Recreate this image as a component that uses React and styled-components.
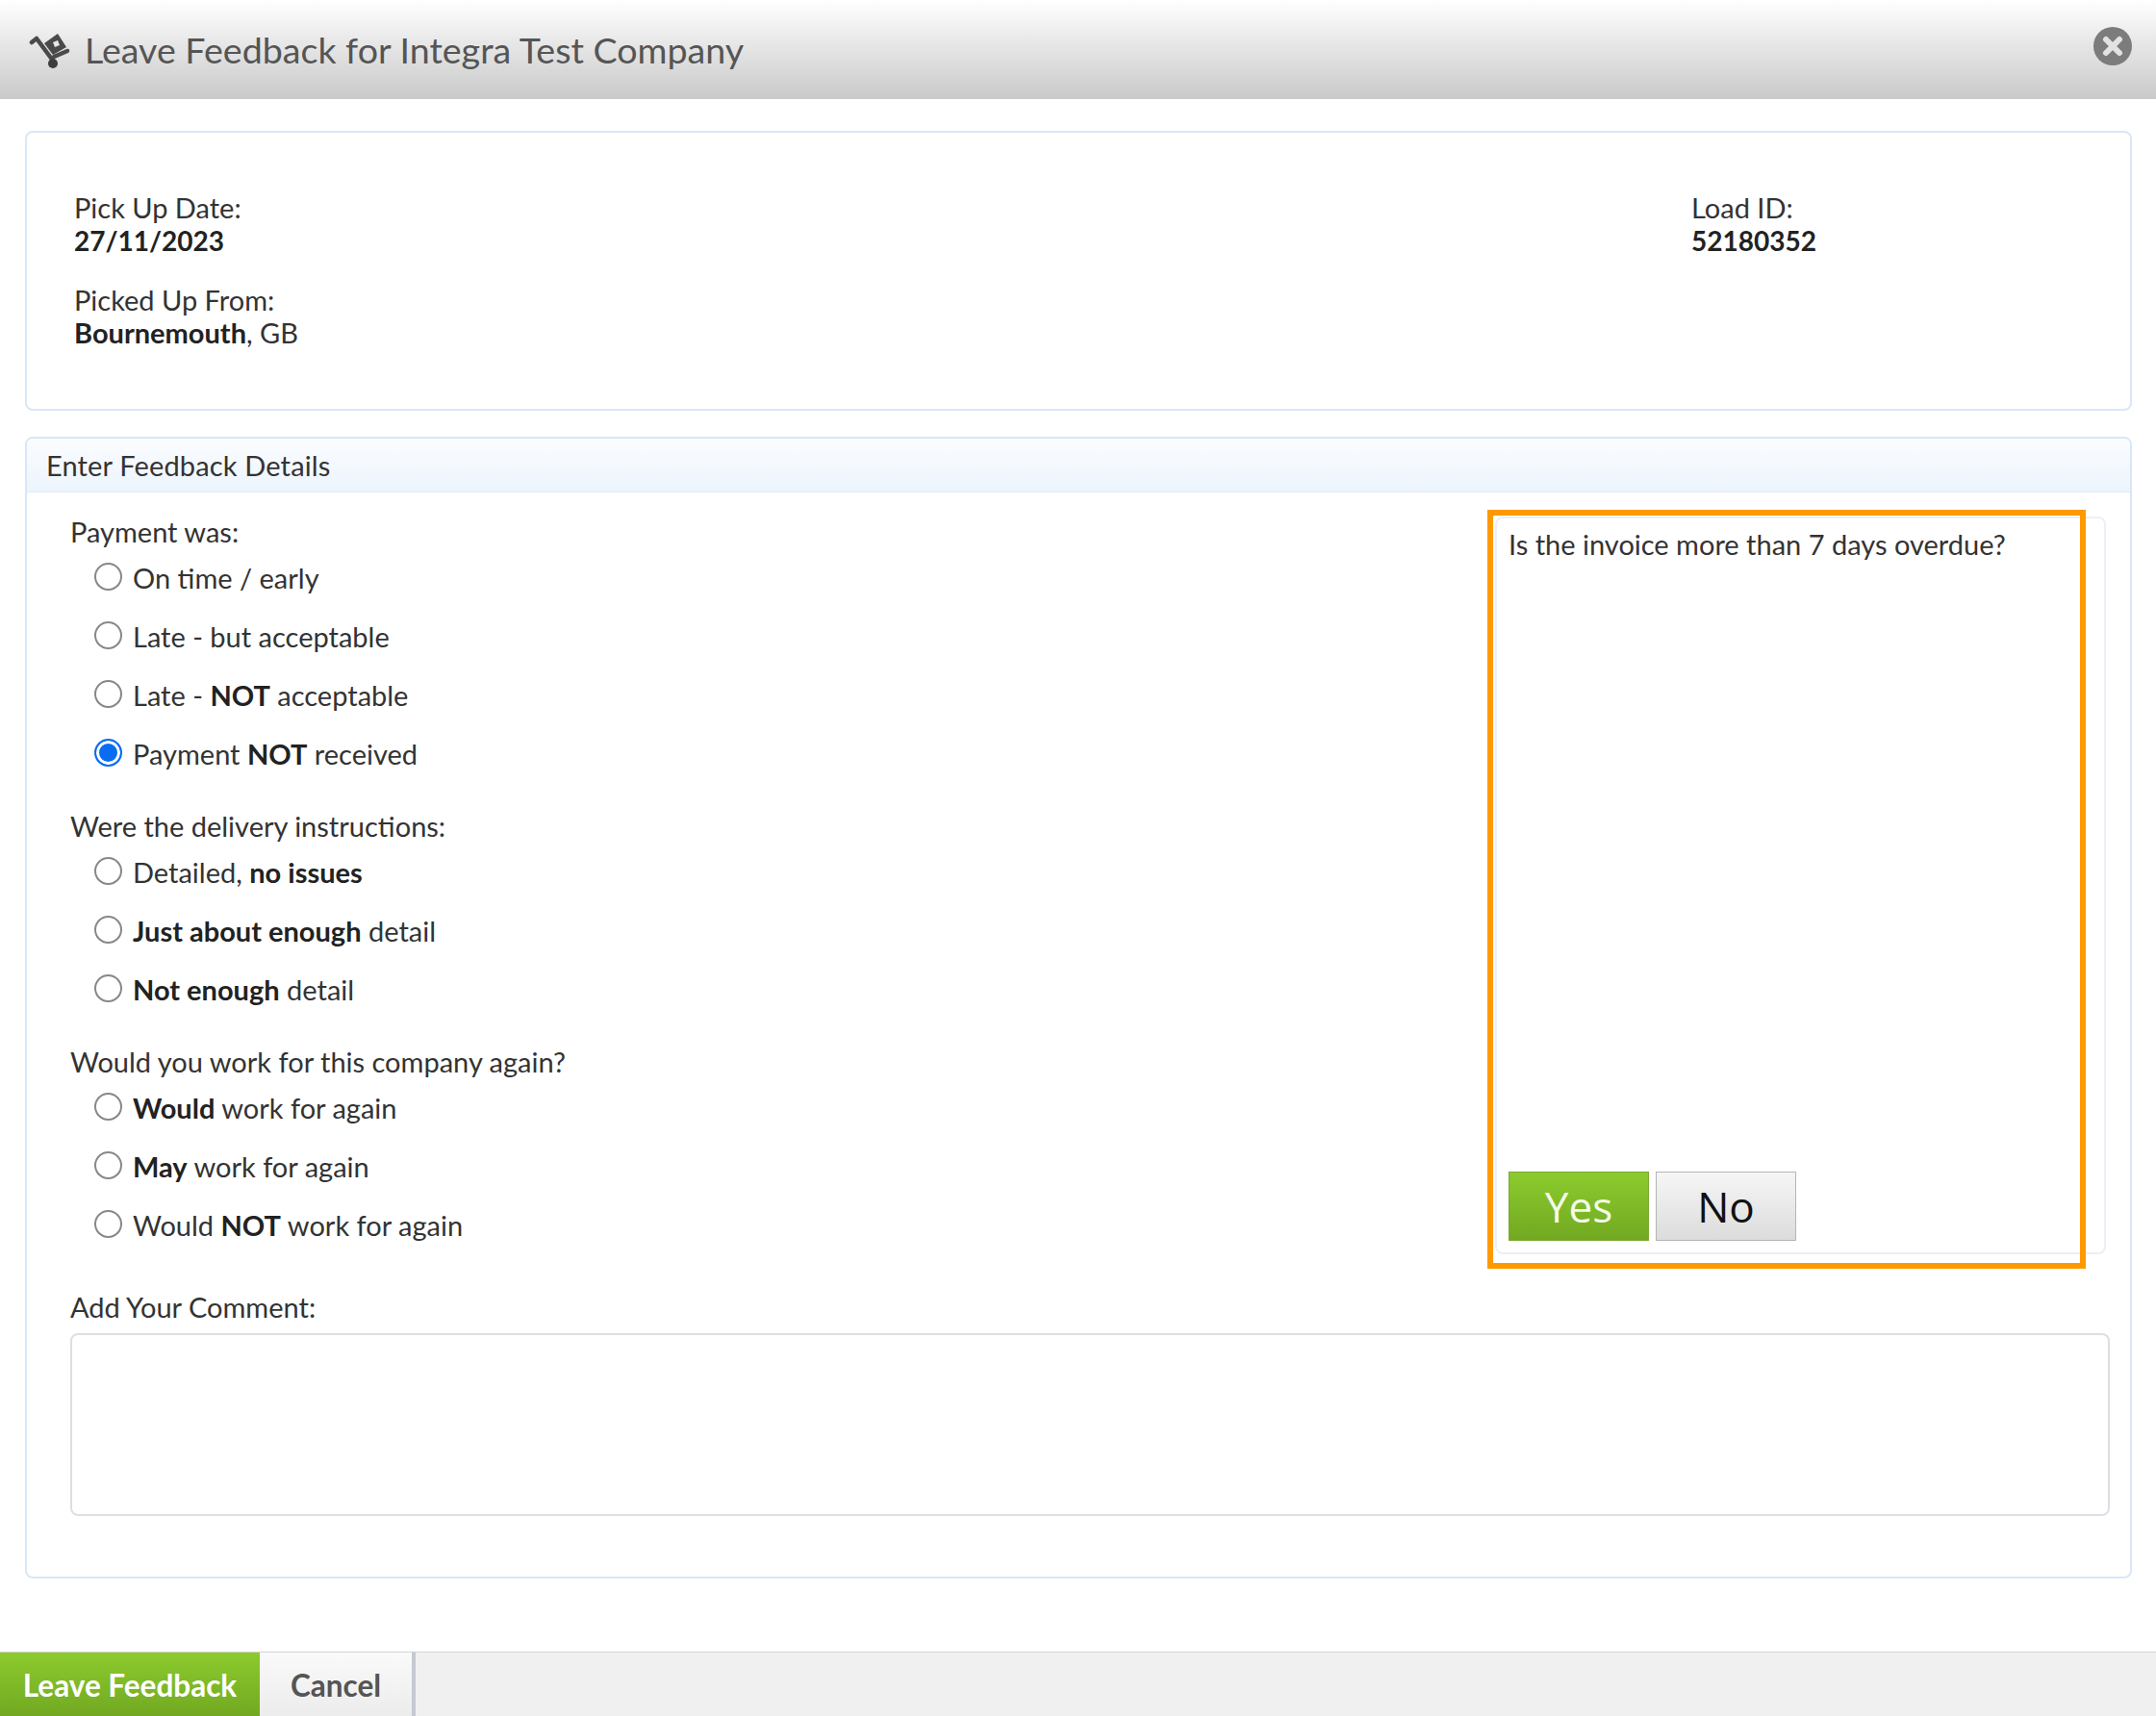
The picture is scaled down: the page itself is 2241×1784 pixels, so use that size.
import React from "react";
import styled, { createGlobalStyle } from "styled-components";

const GlobalStyle = createGlobalStyle`
  html, body { margin: 0; padding: 0; background: #fff; }
  * { box-sizing: border-box; }
  body { font-family: Lato, "Open Sans", sans-serif; color: #333; overflow: hidden; }
`;

const Page = styled.div`
  position: relative;
  width: 2241px;
  height: 1784px;
  display: flex;
  flex-direction: column;
`;

const TitleBar = styled.div`
  height: 103px;
  flex: none;
  padding: 0 25px 0 30px;
  display: flex;
  align-items: center;
  gap: 13px;
  background: linear-gradient(#ffffff, #c9c9c9);
`;

const Title = styled.h1`
  flex: 1;
  margin: 0;
  font-size: 37.6px;
  font-weight: 400;
  color: #555;
`;

const CloseWrap = styled.div`
  align-self: flex-start;
  margin-top: 28px;
  height: 40px;
`;

const Content = styled.div`
  flex: 1;
  padding: 33px 25px 0 26px;
  display: flex;
  flex-direction: column;
  gap: 27px;
`;

const Panel = styled.section`
  border: 2px solid #d9e7f8;
  border-radius: 8px;
  background: #fff;
`;

const InfoPanel = styled(Panel)`
  height: 291px;
  padding: 61px 50px 0 49px;
  display: flex;
  justify-content: space-between;
`;

const InfoCol = styled.div`
  width: ${(p) => p.$width || "auto"};
  display: flex;
  flex-direction: column;
  gap: 28px;
`;

const InfoItem = styled.div`
  font-size: 29px;
  line-height: 34px;
`;

const Value = styled.div`
  b { font-weight: 700; color: #222; }
`;

const NumberValue = styled(Value)`
  font-size: 28px;
`;

const FeedbackPanel = styled(Panel)`
  height: 1187px;
`;

const PanelHead = styled.div`
  height: 56px;
  padding: 0 20px;
  display: flex;
  align-items: center;
  font-size: 29px;
  letter-spacing: 0.15px;
  color: #333;
  border-bottom: 1px solid #e2ebf6;
  background: linear-gradient(#fbfdff, #ecf4fd);
  border-radius: 6px 6px 0 0;
`;

const PanelBody = styled.div`
  padding: 24px 21px 0 45px;
`;

const Columns = styled.div`
  display: flex;
  justify-content: space-between;
  height: 804px;
`;

const Questions = styled.div`
  display: flex;
  flex-direction: column;
`;

const Question = styled.fieldset`
  margin: 0 0 28px;
  padding: 0;
  border: 0;
`;

const Legend = styled.div`
  font-size: 29px;
  line-height: 34px;
`;

const Option = styled.label`
  height: 61px;
  padding-left: 25px;
  display: flex;
  align-items: center;
  gap: 11px;
  font-size: 29px;
  b { font-weight: 700; color: #222; }
`;

const Radio = styled.span`
  width: 29px;
  height: 29px;
  flex: none;
  margin-top: -3px;
  border-radius: 50%;
  border: 2px solid ${(p) => (p.$checked ? "#0a6cf0" : "#888")};
  background: ${(p) => (p.$checked ? "#0a6cf0" : "#fff")};
  box-shadow: ${(p) => (p.$checked ? "inset 0 0 0 3px #fff" : "none")};
`;

const SidePanel = styled.div`
  width: 635px;
  height: 767px;
  margin: 1px 4px 0 0;
  padding: 6px 12px 0;
  display: flex;
  flex-direction: column;
  justify-content: space-between;
  border: 2px solid #eceff6;
  border-radius: 8px;
  font-size: 29px;
`;

const SideQuestion = styled.div`
  line-height: 42px;
`;

const Choices = styled.div`
  display: flex;
  gap: 7px;
  margin-bottom: 12px;
`;

const Choice = styled.button`
  width: 146px;
  height: 72px;
  padding: 0;
  font-family: "Open Sans", sans-serif;
  font-size: 44px;
  color: ${(p) => (p.$primary ? "#f4fbe8" : "#111")};
  border: 1px solid ${(p) => (p.$primary ? "#7aa82e" : "#b5b5b5")};
  background: ${(p) =>
    p.$primary
      ? "linear-gradient(#8ccb2e, #72a821)"
      : "linear-gradient(#f6f6f6, #dcdcdc)"};
`;

const CommentLabel = styled.div`
  font-size: 29px;
  line-height: 38px;
`;

const CommentBox = styled.textarea`
  display: block;
  width: 100%;
  height: 190px;
  margin-top: 8px;
  resize: none;
  border: 2px solid #dcdfe3;
  border-radius: 8px;
  background: #fff;
`;

const Footer = styled.div`
  height: 67px;
  flex: none;
  display: flex;
  background: #f0f0f0;
  border-top: 1px solid #d4d4d4;
`;

const FooterButton = styled.button`
  width: ${(p) => p.$width};
  padding: 2px 0 0;
  font-family: Lato, sans-serif;
  font-size: 31.5px;
  font-weight: 700;
  border: 0;
  color: ${(p) => (p.$primary ? "#fff" : "#555")};
  background: ${(p) =>
    p.$primary
      ? "linear-gradient(#8ccb2e, #72a821)"
      : "linear-gradient(#fafafa, #ececec)"};
  border-right: ${(p) => (p.$primary ? "0" : "4px solid #c6c9d2")};
`;

const Highlight = styled.div`
  position: absolute;
  left: 1546px;
  top: 530px;
  width: 622px;
  height: 789px;
  border: 6px solid #ff9900;
  pointer-events: none;
`;

const Logo = () => (
  <svg width="45" height="42" viewBox="30 30 45 42">
    <path d="M33 43 L38 39 L55 62" fill="none" stroke="#4a4a4a" strokeWidth="4.5" strokeLinecap="round" strokeLinejoin="round" />
    <path d="M56 58 L70 52" fill="none" stroke="#4a4a4a" strokeWidth="4.5" strokeLinecap="round" />
    <path d="M46 44 L60 34 L69 48 L55 56 Z M55 43 L60 41 L62 46 L57 48 Z" fill="#4a4a4a" fillRule="evenodd" />
    <circle cx="55" cy="65" r="5" fill="#3c3c3c" />
  </svg>
);

const CloseIcon = () => (
  <svg width="40" height="40" viewBox="0 0 40 40">
    <circle cx="20" cy="20" r="20" fill="#7c7c7c" />
    <path d="M13 13 L27 27 M27 13 L13 27" stroke="#e2e2e2" strokeWidth="6" strokeLinecap="round" />
  </svg>
);

const questions = [
  {
    label: "Payment was:",
    options: [
      <>On time / early</>,
      <>Late - but acceptable</>,
      <>Late - <b>NOT</b> acceptable</>,
      <>Payment <b>NOT</b> received</>,
    ],
    checked: 3,
  },
  {
    label: "Were the delivery instructions:",
    options: [
      <>Detailed, <b>no issues</b></>,
      <><b>Just about enough</b> detail</>,
      <><b>Not enough</b> detail</>,
    ],
  },
  {
    label: "Would you work for this company again?",
    options: [
      <><b>Would</b> work for again</>,
      <><b>May</b> work for again</>,
      <>Would <b>NOT</b> work for again</>,
    ],
  },
];

const App = () => (
  <Page>
    <GlobalStyle />
    <TitleBar>
      <Logo />
      <Title>Leave Feedback for Integra Test Company</Title>
      <CloseWrap>
        <CloseIcon />
      </CloseWrap>
    </TitleBar>
    <Content>
      <InfoPanel>
        <InfoCol>
          <InfoItem>
            Pick Up Date:
            <NumberValue><b>27/11/2023</b></NumberValue>
          </InfoItem>
          <InfoItem>
            Picked Up From:
            <Value><b>Bournemouth</b>, GB</Value>
          </InfoItem>
        </InfoCol>
        <InfoCol $width="406px">
          <InfoItem>
            Load ID:
            <NumberValue><b>52180352</b></NumberValue>
          </InfoItem>
        </InfoCol>
      </InfoPanel>
      <FeedbackPanel>
        <PanelHead>Enter Feedback Details</PanelHead>
        <PanelBody>
          <Columns>
            <Questions>
              {questions.map((q) => (
                <Question key={q.label}>
                  <Legend>{q.label}</Legend>
                  {q.options.map((opt, i) => (
                    <Option key={i}>
                      <Radio $checked={q.checked === i} />
                      <span>{opt}</span>
                    </Option>
                  ))}
                </Question>
              ))}
            </Questions>
            <SidePanel>
              <SideQuestion>Is the invoice more than 7 days overdue?</SideQuestion>
              <Choices>
                <Choice $primary>Yes</Choice>
                <Choice>No</Choice>
              </Choices>
            </SidePanel>
          </Columns>
          <CommentLabel>Add Your Comment:</CommentLabel>
          <CommentBox />
        </PanelBody>
      </FeedbackPanel>
    </Content>
    <Footer>
      <FooterButton $primary $width="270px">Leave Feedback</FooterButton>
      <FooterButton $width="162px">Cancel</FooterButton>
    </Footer>
    <Highlight />
  </Page>
);

export default App;
